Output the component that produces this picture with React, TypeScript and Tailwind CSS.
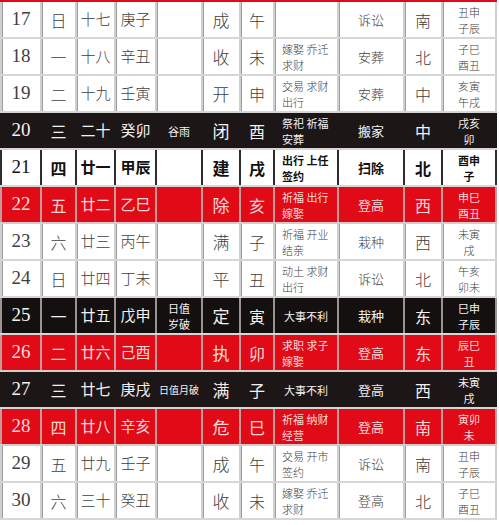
import React from "react";

type Kind = "white" | "bold" | "black" | "blackGrid" | "red";

interface Row {
  day: string;
  week: string;
  lunar: string;
  gz: string;
  term: string[];
  jc: string;
  zhi: string;
  yi: string[];
  ji: string;
  fw: string;
  shi: string[];
  kind: Kind;
}

const rows: Row[] = [
  { day: "17", week: "日", lunar: "十七", gz: "庚子", term: [], jc: "成", zhi: "午", yi: [], ji: "诉讼", fw: "南", shi: ["丑申", "子辰"], kind: "white" },
  { day: "18", week: "一", lunar: "十八", gz: "辛丑", term: [], jc: "收", zhi: "未", yi: ["嫁娶 乔迁", "求财"], ji: "安葬", fw: "北", shi: ["子巳", "酉丑"], kind: "white" },
  { day: "19", week: "二", lunar: "十九", gz: "壬寅", term: [], jc: "开", zhi: "申", yi: ["交易 求财", "出行"], ji: "安葬", fw: "中", shi: ["亥寅", "午戌"], kind: "white" },
  { day: "20", week: "三", lunar: "二十", gz: "癸卯", term: ["谷雨"], jc: "闭", zhi: "酉", yi: ["祭祀 祈福", "安葬"], ji: "搬家", fw: "中", shi: ["戌亥", "卯"], kind: "black" },
  { day: "21", week: "四", lunar: "廿一", gz: "甲辰", term: [], jc: "建", zhi: "戌", yi: ["出行 上任", "签约"], ji: "扫除", fw: "北", shi: ["酉申", "子"], kind: "bold" },
  { day: "22", week: "五", lunar: "廿二", gz: "乙巳", term: [], jc: "除", zhi: "亥", yi: ["祈福 出行", "嫁娶"], ji: "登高", fw: "西", shi: ["申巳", "酉丑"], kind: "red" },
  { day: "23", week: "六", lunar: "廿三", gz: "丙午", term: [], jc: "满", zhi: "子", yi: ["祈福 开业", "结亲"], ji: "栽种", fw: "西", shi: ["未寅", "戌"], kind: "white" },
  { day: "24", week: "日", lunar: "廿四", gz: "丁未", term: [], jc: "平", zhi: "丑", yi: ["动土 求财", "出行"], ji: "诉讼", fw: "北", shi: ["午亥", "卯未"], kind: "white" },
  { day: "25", week: "一", lunar: "廿五", gz: "戊申", term: ["日值", "岁破"], jc: "定", zhi: "寅", yi: ["大事不利"], ji: "栽种", fw: "东", shi: ["巳申", "子辰"], kind: "blackGrid" },
  { day: "26", week: "二", lunar: "廿六", gz: "己酉", term: [], jc: "执", zhi: "卯", yi: ["求职 求子", "嫁娶"], ji: "登高", fw: "东", shi: ["辰巳", "丑"], kind: "red" },
  { day: "27", week: "三", lunar: "廿七", gz: "庚戌", term: ["日值月破"], jc: "满", zhi: "子", yi: ["大事不利"], ji: "登高", fw: "西", shi: ["未寅", "戌"], kind: "black" },
  { day: "28", week: "四", lunar: "廿八", gz: "辛亥", term: [], jc: "危", zhi: "巳", yi: ["祈福 纳财", "经营"], ji: "登高", fw: "南", shi: ["寅卯", "未"], kind: "red" },
  { day: "29", week: "五", lunar: "廿九", gz: "壬子", term: [], jc: "成", zhi: "午", yi: ["交易 开市", "签约"], ji: "诉讼", fw: "南", shi: ["丑申", "子辰"], kind: "white" },
  { day: "30", week: "六", lunar: "三十", gz: "癸丑", term: [], jc: "收", zhi: "未", yi: ["嫁娶 乔迁", "求财"], ji: "登高", fw: "北", shi: ["子巳", "酉丑"], kind: "white" },
];

const rowStyle: Record<Kind, { row: string; cell: string; text: string }> = {
  white: {
    row: "bg-white border-b-2 border-[#d6d6d6]",
    cell: "border-r-2 border-[#cfcfcf] shadow-[inset_1px_0_0_#9c9c9c]",
    text: "text-[#404040] font-light",
  },
  bold: {
    row: "bg-white border-b-2 border-[#d6d6d6]",
    cell: "border-r-2 border-[#2e2e2e]",
    text: "text-[#111] font-bold",
  },
  black: {
    row: "bg-[#1c1616] border-b-2 border-[#d6d6d6]",
    cell: "border-r-2 border-[#1c1616]",
    text: "text-[#f4f0f0]",
  },
  blackGrid: {
    row: "bg-[#141010] border-b-2 border-[#d6d6d6]",
    cell: "border-r-2 border-[#9a9494]",
    text: "text-[#f4f0f0]",
  },
  red: {
    row: "bg-[#e00b17] border-b-2 border-[#d8c8c8]",
    cell: "border-r-2 border-[#c79a9a]",
    text: "text-[#fbd9d9]",
  },
};

const cjk = "font-['Noto_Sans_CJK_SC',sans-serif]";
const serif = "font-['Liberation_Serif','Noto_Sans_CJK_SC',serif]";

function Cell({ w, kind, className, children }: { w: string; kind: Kind; className?: string; children?: React.ReactNode }) {
  return (
    <div className={`${w} h-full flex items-center justify-center ${rowStyle[kind].cell} ${className ?? ""}`}>
      {children}
    </div>
  );
}

function TableRow({ r }: { r: Row }) {
  const s = rowStyle[r.kind];
  return (
    <div className={`flex h-[37px] ${s.row} ${s.text}`}>
      <Cell w="w-[42px] border-l-2" kind={r.kind}>
        <span className={`${serif} text-[19px] font-normal`}>{r.day}</span>
      </Cell>
      <Cell w="w-[35px]" kind={r.kind}>
        <span className={`${cjk} text-[16px]`}>{r.week}</span>
      </Cell>
      <Cell w="w-[39px]" kind={r.kind}>
        <span className={`${cjk} text-[15px]`}>{r.lunar}</span>
      </Cell>
      <Cell w="w-[41px]" kind={r.kind}>
        <span className={`${cjk} text-[15px]`}>{r.gz}</span>
      </Cell>
      <Cell w="w-[46px]" kind={r.kind} className="flex-col">
        {r.term.map((t) => (
          <span key={t} className={`${cjk} ${t.length > 2 ? "text-[10px]" : "text-[11px]"} leading-[16px]`}>
            {t}
          </span>
        ))}
      </Cell>
      <Cell w="w-[38px]" kind={r.kind}>
        <span className={`${cjk} text-[17px]`}>{r.jc}</span>
      </Cell>
      <Cell w="w-[34px]" kind={r.kind}>
        <span className={`${cjk} text-[16px]`}>{r.zhi}</span>
      </Cell>
      <Cell
        w="w-[64px]"
        kind={r.kind}
        className={r.yi.length > 1 ? "flex-col !items-start pl-[7px]" : "flex-col"}
      >
        {r.yi.map((t) => (
          <span key={t} className={`${cjk} text-[11px] leading-[16px] whitespace-pre`}>
            {t}
          </span>
        ))}
      </Cell>
      <Cell w="w-[66px]" kind={r.kind}>
        <span className={`${cjk} text-[13px]`}>{r.ji}</span>
      </Cell>
      <Cell w="w-[38px]" kind={r.kind}>
        <span className={`${cjk} text-[16px]`}>{r.fw}</span>
      </Cell>
      <Cell w="w-[54px]" kind={r.kind} className="flex-col">
        {r.shi.map((t) => (
          <span key={t} className={`${cjk} text-[11px] leading-[16px]`}>
            {t}
          </span>
        ))}
      </Cell>
    </div>
  );
}

export default function App() {
  return (
    <div className="w-[499px] h-[525px] bg-white overflow-hidden">
      <div className="w-[497px]">
        <div className="h-[2px] bg-[#e00b17]" />
        {rows.map((r) => (
          <TableRow key={r.day} r={r} />
        ))}
      </div>
    </div>
  );
}
